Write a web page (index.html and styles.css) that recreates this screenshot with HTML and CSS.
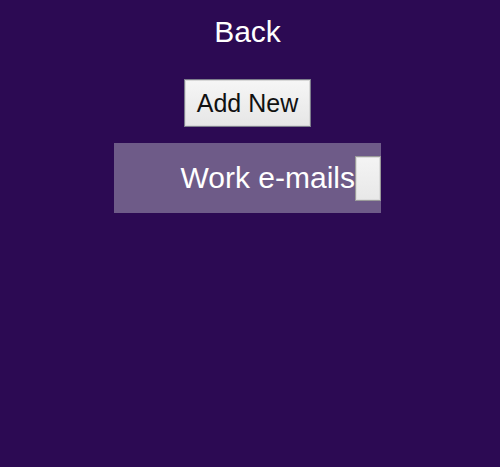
FILE: index.html
```html
<!DOCTYPE html>
<html>
<head>
<meta charset="utf-8">
<link rel="stylesheet" href="styles.css">
</head>
<body>
<main class="page">
  <div class="back">Back</div>
  <button class="add-btn">Add New</button>
  <div class="item">
    <span class="item-title">Work e-mails</span>
    <button class="item-btn"></button>
  </div>
</main>
</body>
</html>
```
FILE: styles.css
```css
html, body {
  margin: 0;
  padding: 0;
  background: #2c0a53;
  height: 100%;
}
.page {
  display: flex;
  flex-direction: column;
  align-items: center;
  padding: 15px 5px 0 0;
  font-family: "Liberation Sans", Arial, sans-serif;
}
.back {
  color: #ffffff;
  font-size: 30px;
  line-height: 34px;
}
.add-btn {
  margin-top: 30px;
  width: 127px;
  height: 48px;
  font-family: "Liberation Sans", Arial, sans-serif;
  font-size: 25px;
  color: #111;
  background: linear-gradient(#f6f6f6, #e6e6e6);
  border: 1px solid #7d7d8c;
  box-shadow: inset 0 0 0 1px #d8d8d8;
  padding: 0;
}
.item {
  margin-top: 16px;
  width: 267px;
  height: 70px;
  background: #6e5b88;
  display: flex;
  align-items: center;
  justify-content: flex-end;
  box-sizing: border-box;
}
.item-title {
  color: #ffffff;
  font-size: 30px;
  line-height: 34px;
}
.item-btn {
  width: 26px;
  height: 45px;
  padding: 0;
  background: linear-gradient(#f4f4f4, #e8e8e8);
  border: 1px solid #9a9a9a;
  box-shadow: inset 0 0 0 1px #dcdcdc;
}
```
